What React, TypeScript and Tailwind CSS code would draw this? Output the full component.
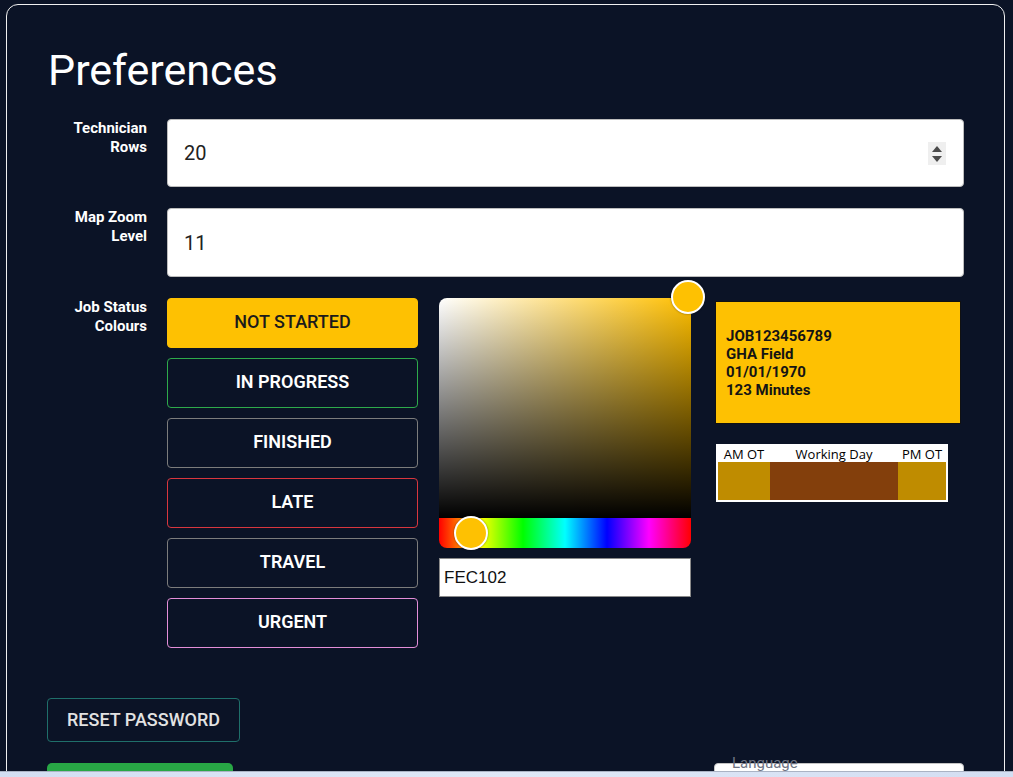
import React from "react";

const statuses = [
  { label: "NOT STARTED", cls: "bg-[#fec102] border-[#fec102] text-[#1b1b1b] font-medium" },
  { label: "IN PROGRESS", cls: "border-[#2eaa4b] text-white font-semibold" },
  { label: "FINISHED", cls: "border-[#7c7c7c] text-white font-semibold" },
  { label: "LATE", cls: "border-[#d9363e] text-white font-semibold" },
  { label: "TRAVEL", cls: "border-[#7c7c7c] text-white font-semibold" },
  { label: "URGENT", cls: "border-[#e48ed8] text-white font-semibold" },
];

function Label({ lines }: { lines: string[] }) {
  return (
    <div className="w-[99px] shrink-0 text-right text-[15px] font-bold leading-[19px] text-white">
      {lines.map((l) => (
        <div key={l}>{l}</div>
      ))}
    </div>
  );
}

export default function App() {
  return (
    <div className="relative h-[777px] overflow-hidden bg-[#0b1326] pl-[6px] pr-[8px] pt-[4px] font-['Roboto',sans-serif]">
      <div className="h-[900px] rounded-t-[12px] border border-[#f0f0f0] px-[40px] pl-[41px] pt-[40px]">
        <h1 className="text-[43px] font-normal leading-[50px] text-white">Preferences</h1>

        <div className="mt-[24px] flex flex-col gap-[21px]">
          {/* Technician Rows */}
          <div className="flex gap-[20px]">
            <Label lines={["Technician", "Rows"]} />
            <div className="relative flex h-[68px] flex-1 items-center rounded-[4px] border border-[#bdbdbd] bg-white pl-[16px]">
              <span className="text-[20px] text-[#222]">20</span>
              <div className="absolute right-[17px] top-[22px] flex h-[23px] w-[18px] flex-col items-center justify-center gap-[4px] bg-[#efefef]">
                <svg width="10" height="6" viewBox="0 0 10 6">
                  <polygon points="5,0 10,6 0,6" fill="#4a4a4a" />
                </svg>
                <svg width="10" height="6" viewBox="0 0 10 6">
                  <polygon points="0,0 10,0 5,6" fill="#4a4a4a" />
                </svg>
              </div>
            </div>
          </div>

          {/* Map Zoom Level */}
          <div className="flex gap-[20px]">
            <Label lines={["Map Zoom", "Level"]} />
            <div className="flex h-[69px] flex-1 items-center rounded-[4px] border border-[#bdbdbd] bg-white pl-[16px]">
              <span className="text-[20px] text-[#222]">11</span>
            </div>
          </div>

          {/* Job Status Colours */}
          <div className="flex gap-[20px]">
            <Label lines={["Job Status", "Colours"]} />
            <div className="flex w-[251px] shrink-0 flex-col gap-[10px]">
              {statuses.map((s) => (
                <div
                  key={s.label}
                  className={`flex h-[50px] items-center justify-center rounded-[4px] border pb-[3px] text-[18px] ${s.cls}`}
                >
                  {s.label}
                </div>
              ))}
            </div>

            {/* Colour picker */}
            <div className="ml-[1px] w-[252px] shrink-0">
              <div className="relative h-[250px] w-[252px]">
                <div className="h-[250px] w-[252px] overflow-hidden rounded-[8px]">
                  <div className="h-[220px] w-full bg-[linear-gradient(to_top,#000,rgba(0,0,0,0)),linear-gradient(to_right,#fff,#ffbf00)]" />
                  <div className="h-[30px] w-full bg-[linear-gradient(to_right,#f00,#ff0_16.66%,#0f0_33.33%,#0ff_50%,#00f_66.66%,#f0f_83.33%,#f00)]" />
                </div>
                <div className="absolute right-[-14px] top-[-18px] h-[34px] w-[34px] rounded-full border-[2px] border-white bg-[#fec102] shadow-[0_0_2px_rgba(0,0,0,0.5)]" />
                <div className="absolute left-[15px] top-[218px] h-[34px] w-[34px] rounded-full border-[2px] border-white bg-[#fec102] shadow-[0_0_2px_rgba(0,0,0,0.5)]" />
              </div>
              <div className="mt-[10px] flex h-[39px] items-center border border-[#8a8a8a] bg-white pl-[4px] font-['Liberation_Sans',Arial,sans-serif] text-[17px] text-[#111]">
                FEC102
              </div>
            </div>

            {/* Preview */}
            <div className="ml-[4px] w-[246px] shrink-0 pt-[3px]">
              <div className="flex h-[123px] flex-col justify-center border border-[#111] bg-[#fec102] pl-[10px] text-[15px] font-bold leading-[18px] text-[#141414]">
                <div>JOB123456789</div>
                <div>GHA Field</div>
                <div>01/01/1970</div>
                <div>123 Minutes</div>
              </div>
              <div className="ml-[1px] mt-[20px] w-[232px] border-[2px] border-white bg-white font-['Open_Sans',sans-serif] text-[13px] text-black">
                <div className="flex h-[16px] items-center leading-[16px]">
                  <div className="w-[52px] text-center">AM OT</div>
                  <div className="w-[128px] text-center">Working Day</div>
                  <div className="flex-1 text-center">PM OT</div>
                </div>
                <div className="flex h-[38px]">
                  <div className="w-[52px] bg-[#bf8c00]" />
                  <div className="w-[128px] bg-[#833f0c]" />
                  <div className="flex-1 bg-[#bf8c00]" />
                </div>
              </div>
            </div>
          </div>
        </div>

        <div className="mt-[50px] flex h-[44px] w-[193px] -ml-px items-center justify-center rounded-[4px] border border-[#1f6f6a] pb-[1px] text-[18px] font-medium text-[#e2e2e2]">
          RESET PASSWORD
        </div>

        <div className="mt-[21px] flex">
          <div className="-ml-px h-[40px] w-[186px] rounded-[5px] bg-[#28a745]" />
          <div className="relative ml-auto h-[56px] w-[250px] rounded-[4px] border border-[#c4c4c4] bg-white">
            <span className="absolute left-[17px] top-[-10px] text-[15px] leading-[18px] text-[#6e7383]">Language</span>
          </div>
        </div>
      </div>
      <div className="absolute bottom-0 left-0 right-0 h-[6px] border-t border-[#aab3c4] bg-[linear-gradient(to_right,#d3def2,#dfe8f7,#d3def2)]" />
    </div>
  );
}
